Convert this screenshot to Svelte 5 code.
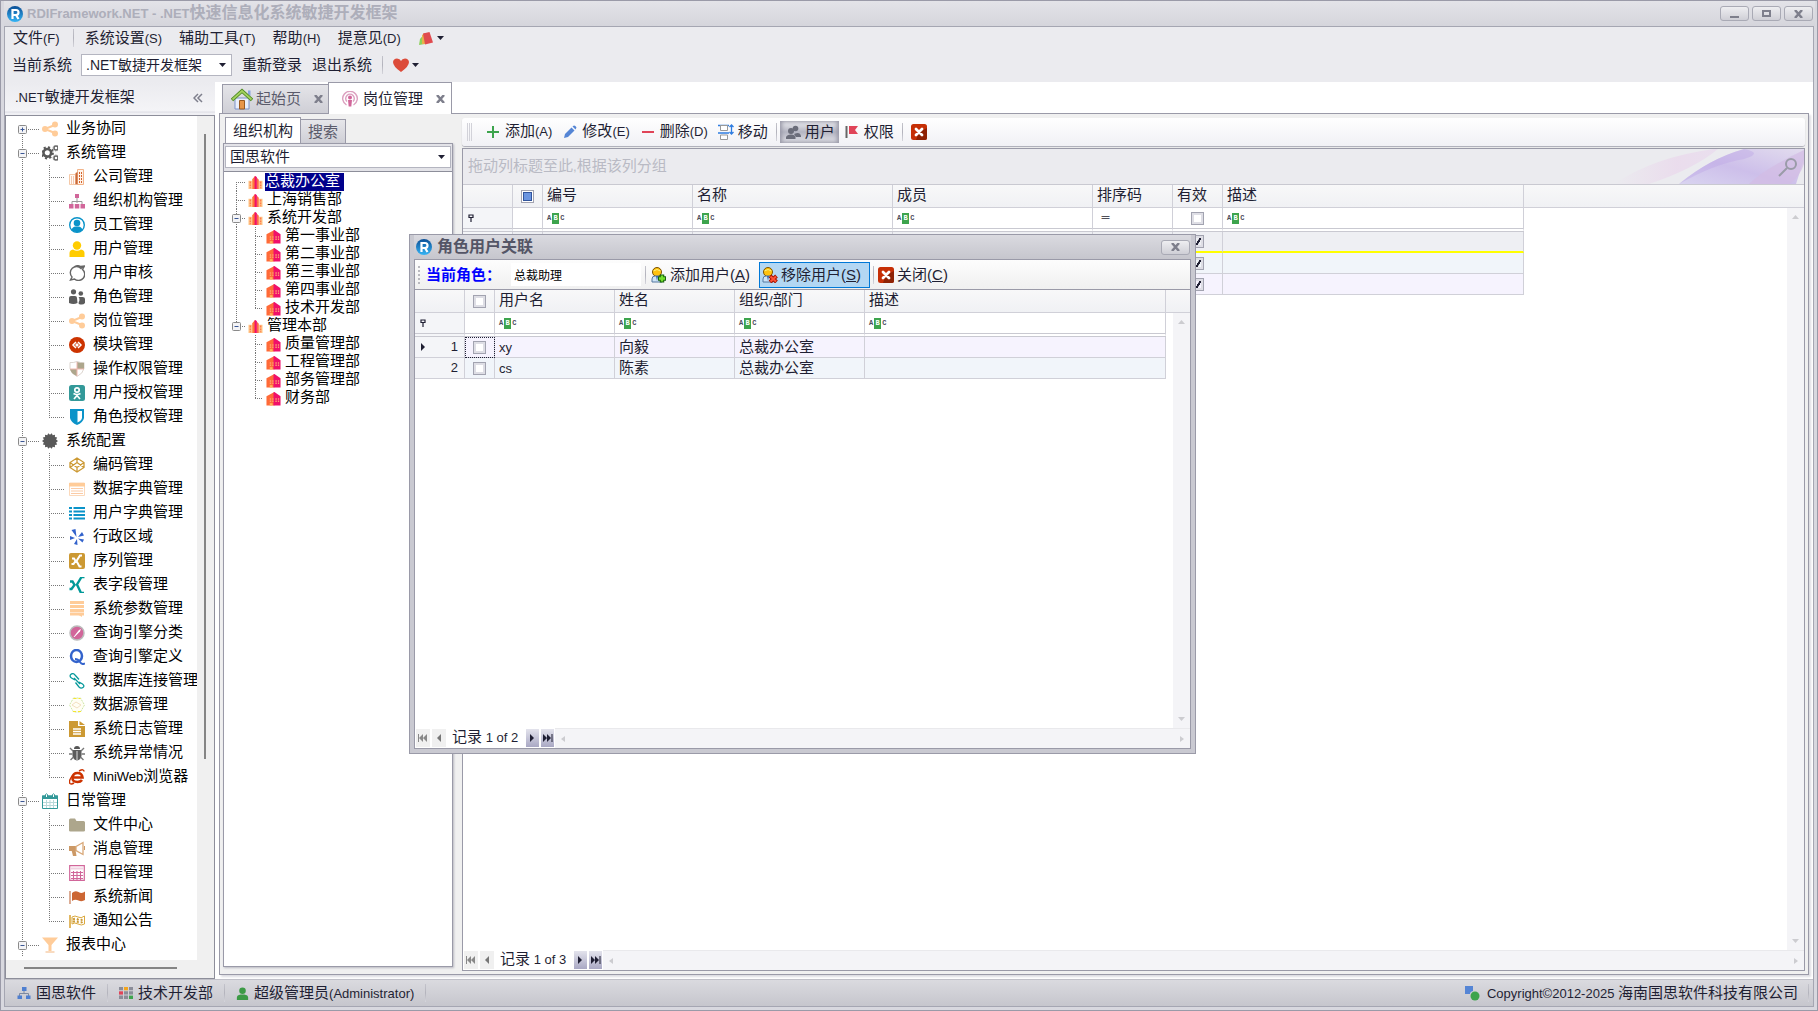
<script>
    const star = (n, r1, r2) => {
        const pts = [];
        for (let i = 0; i < n * 2; i++) {
            const r = i % 2 ? r2 : r1;
            const a = (Math.PI * i) / n;
            pts.push(`${(8 + r * Math.cos(a)).toFixed(1)},${(8 + r * Math.sin(a)).toFixed(1)}`);
        }
        return pts.join(' ');
    };

    const person = '<circle cx="6" cy="5" r="4.500" fill="#ffc20e" stroke="#7a5200"/><path d="M1 15v-3q0-3 3-3h4q3 0 3 3v3z" fill="#cfe4f7" stroke="#5578a0"/><path d="M5 9h2l-1 5z" fill="#2f66b0"/><path d="M2.500 4q3.500-3 7 0" stroke="#fff27a" fill="none"/>';

    const icons = {
        logo: '<defs><linearGradient id="lg" x2="0" y2="1"><stop stop-color="#0c4f96"/><stop offset="1" stop-color="#35b4f5"/></linearGradient></defs><circle cx="8" cy="8" r="8" fill="url(#lg)"/><path d="M5.500 13V4h3.500q2.500 0 2.500 2.500T9 9H6M9 9l2.500 4" stroke="#fff" stroke-width="2.200" fill="none"/>',
        share: '<path d="M14 3.500L3 8l11 4.500" stroke="#fc9" stroke-width="2" fill="none"/><g fill="#fc9"><circle cx="13" cy="3.500" r="3"/><circle cx="3" cy="8" r="3"/><circle cx="13" cy="12.500" r="3"/></g>',
        gears: '<g transform="translate(-1.500 1) scale(.85)"><circle cx="8" cy="8" r="4.500" fill="none" stroke="#595959" stroke-width="3"/><circle cx="8" cy="8" r="6.500" fill="none" stroke="#595959" stroke-width="2.500" stroke-dasharray="2.500 2.600"/></g><g fill="none" stroke="#666" stroke-width="1.500"><circle cx="14" cy="3" r="2"/><circle cx="14" cy="13" r="2"/></g><g fill="none" stroke="#888" stroke-width="1" stroke-dasharray="1 1.200"><circle cx="14" cy="3" r="3"/><circle cx="14" cy="13" r="3"/></g>',
        company: '<path d="M.5 15.500V5.500h6v10z" fill="#fffaf6" stroke="#f5c9a8"/><path d="M8.500 15.500V.5h6v15z" fill="#fff3ea" stroke="#f2b48a"/><path d="M6.500 15.500V4l2-1v12.500z" fill="#c96a3a"/><path d="M2.500 7.500v7M4.500 7.500v7" stroke="#e8996b" stroke-dasharray="1 1"/><path d="M10.500 3v11M12.500 3v11" stroke="#d2622a" stroke-dasharray="2 1"/>',
        org: '<path d="M8 5v5M3 11V8.500h10V11" stroke="#9a9a9a" fill="none"/><g fill="#d1669a"><path d="M6 1h4v4H6zM0 11h4.500v4.500H0zM5.800 11h4.500v4.500H5.800zM11.500 11H16v4.500h-4.500z"/></g>',
        staff: '<circle cx="8" cy="8" r="7.300" fill="#fff" stroke="#0a93c9" stroke-width="1.400"/><circle cx="8" cy="6" r="3.300" fill="#0a93c9"/><path d="M2.500 13q1-3.500 4-3.500h3q3 0 4 3.500-5 4.500-11 0z" fill="#0a93c9"/>',
        user: '<circle cx="8" cy="4.500" r="4.200" fill="#fc0"/><path d="M0.500 16v-4q0-3 3.500-3.500 4 2.500 8 0 3.500.5 3.500 3.500v4z" fill="#fc0"/>',
        audit: '<path d="M14.500 1l-2.500 2.500A6 6 0 0 0 3 12l-1.500 3 4-1a6 6 0 0 0 8-9.500L15.500 1l-4 .5A6 6 0 0 0 5 2" fill="none" stroke="#666" stroke-width="1.400"/>',
        roles: '<g fill="#5c5c5c"><circle cx="4.500" cy="2.800" r="2.600"/><circle cx="11.800" cy="4.500" r="2.300"/><path d="M0 14V9q0-2 2-2h4q2 0 2 2l.5 5q-4 2-8.500 0z"/><path d="M9.800 15q-.5-2 .5-3 .5-3-.8-4h4q2.500 0 2.500 2v4q-2 2.500-6.200 1z"/></g>',
        module: '<circle cx="8" cy="8" r="8" fill="#c30"/><path d="M7 5L4 8l3 3M9 5l3 3-3 3" stroke="#fff" stroke-width="1.500" fill="none"/><path d="M8 6L6 8l2 2 2-2z" fill="#fff"/>',
        shield4: '<path d="M8 .5q4 1.500 7 1v6q-1 5-7 8-6-3-7-8v-6q3 .5 7-1z" fill="#fff" stroke="#dcd5cf"/><path d="M8 1v7h7V2q-4 0-7-1zM8 8v7Q2 13 1 8z" fill="#ada68c"/><path d="M1 8h14M8 1v14" stroke="#f0b8b0"/>',
        auth: '<rect width="16" height="16" rx="2.500" fill="#399"/><circle cx="8" cy="5" r="2.200" fill="none" stroke="#fff" stroke-width="1.700"/><path d="M4.500 8.500q3.500 2 7 0M5 14l3-3.500 3 3.500" fill="none" stroke="#fff" stroke-width="1.700"/>',
        shield: '<path d="M1 0h14v9q-1 4.500-7 7-6-2.500-7-7z" fill="#0a93c9"/><path d="M8.500 2H13v7q-.5 2.500-4.500 4.500z" fill="#fff"/>',
        cog: `<polygon points="${star(14, 8, 6.3)}" fill="#595959"/>`,
        code: '<path d="M8 1l7 4.500v5L8 15l-7-4.500v-5zM1 5.500l7 5 7-5M1 10.500l7-5 7 5M8 1v4.500M8 10.500V15" fill="none" stroke="#c93" stroke-width="1.300"/>',
        dict: '<path d="M.5 2h15v12.500H.5z" fill="#fff" stroke="#fbd9bb"/><path d="M0 2h16v3.500H0z" fill="#fc9"/><path d="M2 7.500h12M2 10h12M2 12.500h12" stroke="#fbcba6"/>',
        list: '<path d="M0 3h3M0 6.500h3M0 10h3M0 13.500h3M4.500 3H16M4.500 6.500H16M4.500 10H16M4.500 13.500H16" stroke="#0a93c9" stroke-width="2"/>',
        region: '<g fill="#3363cc"><path d="M2.500 1l4-1 1 8zM9 8l4-5 2 3.500zM9 9.500l6 1-1.500 3zM8 10l.5 6-3.500-1zM6 9L1 7v4z"/></g>',
        serial: '<rect width="16" height="16" rx="2" fill="#c93"/><path d="M3 5.500h2L6.500 8 4.500 11h-2M13 2.500h-2L7.500 8l3 5.500h2" fill="none" stroke="#fff" stroke-width="2"/>',
        field: '<path d="M1 4.500h2.500L5.500 8l-3 4H.5M15.500 0h-3L8 7.500l4 8.500h3" fill="none" stroke="#099" stroke-width="2.400"/>',
        params: '<path d="M1 1.500h14M1 5.500h14M1 9.500h14M1 13h14" stroke="#fc9" stroke-width="3"/><path d="M8 13h5v3z" fill="#fc9"/>',
        query: '<circle cx="8" cy="8" r="7" fill="#d1669a" stroke="#bbb" stroke-width="1.500"/><path d="M4.500 12L10 5l2-1-1 2.500L5.500 12z" fill="#fff"/>',
        define: '<ellipse cx="7.500" cy="7" rx="5.500" ry="6" fill="none" stroke="#3363cc" stroke-width="2.500"/><path d="M6 10q3 0 5 3t5 1.500" fill="none" stroke="#3363cc" stroke-width="2"/>',
        link: '<path d="M6 7L2.500 5Q0 3 2 1.300T6 2l4 4.500M10 9l3.500 2q2.500 2 .5 3.500T10 14L6.500 9.500M5 5l6 6" fill="none" stroke="#099a9c" stroke-width="1.300"/>',
        source: '<path d="M4.500 1h7L15.500 8l-4 7h-7L.5 8z" fill="#fffef4" stroke="#cde6a6" stroke-dasharray="2 1"/><path d="M4.500 1.500h7M4 14.500h8" stroke="#f6e52d" stroke-dasharray="3 2"/><path d="M3 8l4-3 5 3-4 3z" stroke="#f3dfc0" fill="none"/>',
        log: '<path d="M0 0h9v5h7v11H0zM10.500 0L16 4h-5.500z" fill="#c93"/><path d="M4 8h8M4 10.500h8M4 13h8" stroke="#fff" stroke-width="1.300"/>',
        bug: '<path d="M5 4q0-3 3-3t3 3z" fill="#555"/><path d="M3.500 5h9v6q-1 4-4.500 4.500Q4.500 15 3.500 11z" fill="#5c5c5c"/><path d="M8 6v9" stroke="#ddd"/><path d="M1 3l3 3M15 3l-3 3M0 9h3.500M16 9h-3.500M1.500 15l3-3M14.500 15l-3-3" stroke="#777" stroke-width="1.400"/>',
        ie: '<path d="M3.500 8.500h10Q13 4 8.500 4T3.500 8.500 8.500 13q3 0 4.500-2" fill="none" stroke="#c30" stroke-width="2.600"/><path d="M10 2q5-2.500 5 .5M4 6Q-1 12 1 14.500q1.500 1 4-.5" fill="none" stroke="#c30" stroke-width="1.500"/>',
        calendar: '<path d="M.5 3h15v12.500H.5z" fill="#fff" stroke="#399"/><path d="M0 2.500h16v3.500H0z" fill="#399"/><path d="M1 9.500h14M1 12.500h14M4.500 7v8M8 7v8M11.500 7v8" stroke="#b9d9d9"/><path d="M3.500 4V1.500q1-1.500 2 0V4M10.500 4V1.500q1-1.500 2 0V4" fill="#fff" stroke="#399"/>',
        folder: '<path d="M0 3q0-1.500 1.500-1.500H6L7.500 4h7Q16 4 16 5.500v8q0 1-1.500 1h-13Q0 14.500 0 13.500z" fill="#ada68c"/>',
        horn: '<path d="M0 5h7v5H0z" fill="#c96"/><path d="M2.500 9h4l1 6H4z" fill="#c96"/><path d="M7 5.500l7-4v12l-7-4z" fill="#fff" stroke="#d9a878" stroke-width="1.300"/><path d="M15.500 5v4" stroke="#c96"/>',
        schedule: '<path d="M.7.7h14.600v14.600H.7z" fill="#fff" stroke="#d1669a" stroke-width="1.200"/><path d="M1 3.500h14" stroke="#f0d0e0" stroke-width="2"/><path d="M2 7.500h12M2 10.500h12M2 13.500h12M4.500 6v9M8 6v9M11.500 6v9" stroke="#d1669a" stroke-width="1.100"/>',
        flag: '<path d="M1 2v13" stroke="#c9805c" stroke-width="1.300"/><path d="M3 4q3-3 6.500-1T16 2.500V11q-3 2-6.500.5T3 12z" fill="#c63"/>',
        notice: '<path d="M1 2v13" stroke="#d9a030" stroke-width="1.500"/><path d="M3 4q3-2 6 0t6.500-1v8q-3 2-6.500 0T3 11z" fill="#fff" stroke="#dba93f"/><path d="M4 6.500q2.500-1.500 5 0t5-.5M4 9q2.500-1.500 5 0t5-.5" fill="none" stroke="#c93" stroke-dasharray="2 2" stroke-width="2"/>',
        glass: '<path d="M0 .5h16L9.500 8v6h-3V8z" fill="#fc9"/><path d="M3.500 15h9" stroke="#f7cfab" stroke-width="1.500"/>',
        house: '<path d="M4 10h14v11H4z" fill="#e9eefc" stroke="#7d93c8"/><path d="M17 2.500h2.500V8L17 6z" fill="#8aa4e0"/><path d="M8.500 12.500h5V21h-5z" fill="#e8964a" stroke="#9a5a22"/><path d="M1 12L11 3l10 9" fill="none" stroke="#4d8a20" stroke-width="3.600"/><path d="M1.500 11.500L11 3l9.500 8.500" fill="none" stroke="#a3d160" stroke-width="1.700"/>',
        podcast: '<g fill="none" stroke="#dca0bf" stroke-width="1.400"><path d="M4.500 14A7.300 7.300 0 1 1 11.500 14"/><path d="M5 10.500A4.300 4.300 0 1 1 11 10.500"/></g><circle cx="8" cy="6.500" r="2" fill="#d1669a"/><path d="M6 9h4l-.7 6.500H6.700z" fill="#d1669a"/>',
        city: '<path d="M.5 6h4v9h-4zM11.500 6h4v9h-4z" fill="#ffc98a"/><path d="M2.500 7v7M13.500 7v7" stroke="#ff7a4d" stroke-width="1.500" stroke-dasharray="2 1"/><path d="M4.500 4.500L7.500 1v14h-3z" fill="#ff7a38"/><path d="M7 1.500L8 1l1.500 1.500V15H7z" fill="#f0106a"/><path d="M9.500 3l2 2v10h-2z" fill="#ff6a45"/>',
        dept: '<path d="M.5 5.500L9 1v14.500H.5z" fill="#ff6a38"/><path d="M8 1.500L9 1l6.500 4.500v10H8z" fill="#f0106a"/><path d="M4 8.500h4M4 11h4M10 8.500h4M10 11h4" stroke="#ffa070" stroke-dasharray="1.500 1.200" stroke-width="1.500"/><path d="M4 13h3v2.500H4z" fill="#ffb45a"/>',
        add: '<path d="M8 2v12M2 8h12" stroke="#3da44d" stroke-width="2"/>',
        edit: '<path d="M2 14l1-4 6.500-6.500 3 3L6 13z" fill="#5585d5"/><path d="M10.500 2.500l1.500-1q1.500 0 2.500 2l-1 2z" fill="#5585d5"/>',
        remove: '<path d="M2 8h12" stroke="#e04458" stroke-width="2"/>',
        move: '<path d="M0 1.500h11M0 9h11" stroke="#2f7de1" stroke-width="1.400"/><path d="M2.500 1.500h7v5h-7zM2.500 11h7v4.500h-7z" fill="#fff" stroke="#999"/><path d="M13.500 1v9M11.500 3l2-2 2 2M11.500 8l2 2 2-2" fill="none" stroke="#2f7de1" stroke-width="1.300"/>',
        users: '<g fill="#6b6d7a"><circle cx="10.500" cy="4.500" r="2.800"/><circle cx="6" cy="7" r="3"/><path d="M1 15v-2q1-2.500 5-2.500t4.500 2.500v2zM9 10q6-3 7 2v1h-5z"/></g>',
        perm: '<path d="M2.500 2v12" stroke="#666" stroke-width="2"/><path d="M5 2h9l-3 4 3 4H5z" fill="#e04458"/>',
        close: '<rect width="16" height="16" rx="2.500" fill="#c62f06"/><path d="M8 8l8-4v10q0 2-2 2H5z" fill="#8e2204"/><path d="M5 5l6 6M11 5l-6 6" stroke="#fff" stroke-width="2.800" stroke-linecap="round"/>',
        userAdd: person + '<path d="M11 7.500v8M7 11.500h8" stroke="#14610a" stroke-width="4.500"/><path d="M11 8.500v6M8 11.500h6" stroke="#73e02b" stroke-width="2.400"/>',
        userDel: person + '<path d="M8 9l6.500 6M14.500 9L8 15" stroke="#a41300" stroke-width="4"/><path d="M8.500 9.500l5.500 5M14 9.500l-5.500 5" stroke="#ff5238" stroke-width="2"/>',
        tags: '<path d="M2 9l5-6v11l-6 1z" fill="#8bd05a"/><path d="M4 5l3-2v11H4z" fill="#e8b04a"/><path d="M5 3.500L11.500 2 15 12.500 7 14.500z" fill="#e04a4e"/>',
        heart: '<path d="M8 15Q0 9.500 0 5 .5 1.500 4 1.500q3 0 4 2.500 1-2.500 4-2.500 3.500 0 4 3.500 0 4.500-8 10z" fill="#dc4b3a"/>',
        net: '<path d="M8 5v3M3.500 11V8.500h9V11" stroke="#7f8aa0" fill="none"/><path d="M6 2h4.500v4H6zM1.500 10.500h4.500V14H1.500zM10 10.500h4.500V14H10z" fill="#4f7fd0"/>',
        blocks: '<g fill="#8b8d99"><path d="M1 2h4v3.300H1zM11 2h4v3.300h-4zM6 6.300h4v3.300H6zM11 6.300h4v3.300h-4zM1 10.600h4V14H1zM6 10.600h4V14H6z"/></g><path d="M6 2h4v3.300H6z" fill="#f2a51f"/><path d="M1 6.300h4v3.300H1z" fill="#e04458"/><path d="M11 10.600h4V14h-4z" fill="#3da44d"/>',
        admin: '<circle cx="8" cy="5" r="3.500" fill="#3c9a45"/><path d="M2 15v-2.500q0-3 4-3.500h4q4 .5 4 3.500V15z" fill="#3c9a45"/>',
        copy: '<path d="M1 1h8v5q-3 .5-3 3H1z" fill="#5585d5"/><circle cx="11" cy="11" r="4.500" fill="#3da44d"/>'
    };

    const menu = ['系统设置(S)', '辅助工具(T)', '帮助(H)', '提意见(D)'];

    const modules = [
        { text: '业务协同', icon: 'share', open: false, items: [] },
        {
            text: '系统管理', icon: 'gears', open: true,
            items: [
                ['company', '公司管理'],
                ['org', '组织机构管理'],
                ['staff', '员工管理'],
                ['user', '用户管理'],
                ['audit', '用户审核'],
                ['roles', '角色管理'],
                ['share', '岗位管理'],
                ['module', '模块管理'],
                ['shield4', '操作权限管理'],
                ['auth', '用户授权管理'],
                ['shield', '角色授权管理']
            ]
        },
        {
            text: '系统配置', icon: 'cog', open: true,
            items: [
                ['code', '编码管理'],
                ['dict', '数据字典管理'],
                ['list', '用户字典管理'],
                ['region', '行政区域'],
                ['serial', '序列管理'],
                ['field', '表字段管理'],
                ['params', '系统参数管理'],
                ['query', '查询引擎分类'],
                ['define', '查询引擎定义'],
                ['link', '数据库连接管理'],
                ['source', '数据源管理'],
                ['log', '系统日志管理'],
                ['bug', '系统异常情况'],
                ['ie', 'MiniWeb浏览器']
            ]
        },
        {
            text: '日常管理', icon: 'calendar', open: true,
            items: [
                ['folder', '文件中心'],
                ['horn', '消息管理'],
                ['schedule', '日程管理'],
                ['flag', '系统新闻'],
                ['notice', '通知公告']
            ]
        },
        { text: '报表中心', icon: 'glass', open: true, items: [] }
    ];

    const orgs = [
        { text: '总裁办公室', items: [] },
        { text: '上海销售部', items: [] },
        { text: '系统开发部', items: ['第一事业部', '第二事业部', '第三事业部', '第四事业部', '技术开发部'] },
        { text: '管理本部', items: ['质量管理部', '工程管理部', '部务管理部', '财务部'] }
    ];

    const users = [
        { name: 'xy', real: '向毅', dept: '总裁办公室' },
        { name: 'cs', real: '陈素', dept: '总裁办公室' }
    ];

    let selected = $state('总裁办公室');
    let dialogOpen = $state(true);

    // latin runs are set smaller than the chinese ones
    function split(text) {
        return text.match(/[\x20-\x7e©]+|[^\x20-\x7e©]+/g) ?? [];
    }
</script>

{#snippet label(text)}
    <span class="label">{#each split(text) as part}{#if /[\x20-\x7e©]/.test(part)}<span class="en">{part}</span>{:else}{part}{/if}{/each}</span>
{/snippet}

{#snippet icon(name, size = 16, box = 16)}
    <svg class="icon" width={size} height={size} viewBox="0 0 {box} {box}" aria-hidden="true">{@html icons[name]}</svg>
{/snippet}

{#snippet caret()}
    <svg class="caret" width="7" height="4" viewBox="0 0 7 4" aria-hidden="true"><path d="M0 0h7L3.500 4z" fill="#1f1f33" /></svg>
{/snippet}

{#snippet cross()}
    <svg width="9" height="8" viewBox="0 0 9 8" aria-hidden="true"><path d="M1 0l7 8M8 0L1 8" stroke="#7e7f8c" stroke-width="2.500" /></svg>
{/snippet}

{#snippet abc()}
    <span class="abc"><i>A</i><b>B</b><i>C</i></span>
{/snippet}

{#snippet pin()}
    <svg class="pin" width="6" height="8" viewBox="0 0 6 8" aria-hidden="true"><path d="M1 1h4v2.500H1zM3 3v5" stroke="#1f1f33" stroke-width="1.200" fill="none" /></svg>
{/snippet}

<!-- x: trunk position, w: width of the guide column -->
{#snippet guide(x, w, h, up, down, box)}
    <svg class="guide" width={w} height={h} viewBox="0 0 {w} {h}" aria-hidden="true">
        <g stroke="#777" stroke-dasharray="1 1" fill="none">
            {#if up}<path d="M{x + 0.5} 0v{h / 2}" />{/if}
            {#if down}<path d="M{x + 0.5} {h / 2}v{h / 2}" />{/if}
            <path d="M{x} {h / 2 + 0.5}h{w - x - 3}" />
        </g>
        {#if box}
            <rect x={x - 3.5} y={h / 2 - 3.5} width="8" height="8" rx="1" fill="#f4f4f6" stroke="#8a8a8a" />
            <path d="M{x - 1.5} {h / 2 + 0.5}h4" stroke="#3a5795" />
            {#if box === 'plus'}<path d="M{x + 0.5} {h / 2 - 1.5}v4" stroke="#3a5795" />{/if}
        {/if}
    </svg>
{/snippet}

{#snippet trunk(x, h)}
    <svg class="trunk" width="1" height={h} style="margin-left: {x}px; margin-right: {-x - 1}px" aria-hidden="true"><path d="M.5 0v{h}" stroke="#777" stroke-dasharray="1 1" /></svg>
{/snippet}

{#snippet navigator(text)}
    <div class="navigator">
        <button class="off" aria-label="第一条"><svg width="10" height="8" viewBox="0 0 10 8"><path d="M0 0h1v8H0zM5 0v8L1 4zM9 0v8L5 4z" fill="#888" /></svg></button>
        <button class="off" aria-label="上一条"><svg width="5" height="8" viewBox="0 0 5 8"><path d="M4 0v8L0 4z" fill="#777" /></svg></button>
        <span class="count">{@render label(text)}</span>
        <button aria-label="下一条"><svg width="5" height="8" viewBox="0 0 5 8"><path d="M0 0v8l4-4z" fill="#1f1f33" /></svg></button>
        <button aria-label="最后一条"><svg width="10" height="8" viewBox="0 0 10 8"><path d="M0 0v8l4-4zM4 0v8l4-4zM8.500 0h1v8h-1z" fill="#1f1f33" /></svg></button>
        <div class="hscroll">
            <svg width="4" height="6" viewBox="0 0 4 6"><path d="M4 0v6L0 3z" fill="#ccccd0" /></svg>
            <svg width="4" height="6" viewBox="0 0 4 6"><path d="M0 0v6l4-3z" fill="#ccccd0" /></svg>
        </div>
    </div>
{/snippet}

{#snippet vscroll()}
    <div class="vscroll">
        <svg width="7" height="4" viewBox="0 0 7 4"><path d="M0 4h7L3.500 0z" fill="#ccccd0" /></svg>
        <svg width="7" height="4" viewBox="0 0 7 4"><path d="M0 0h7L3.500 4z" fill="#ccccd0" /></svg>
    </div>
{/snippet}

<div class="window">
    <header class="titlebar">
        {@render icon('logo')}
        <h1>{@render label('RDIFramework.NET - .NET快速信息化系统敏捷开发框架')}</h1>
        <button class="sysbtn" aria-label="最小化"><svg width="9" height="8" viewBox="0 0 9 8"><path d="M0 6h9v2H0z" fill="#7e7f8c" /></svg></button>
        <button class="sysbtn" aria-label="最大化"><svg width="9" height="8" viewBox="0 0 9 8"><path d="M1 1h7v5H1z" fill="none" stroke="#7e7f8c" stroke-width="2" /></svg></button>
        <button class="sysbtn" aria-label="关闭">{@render cross()}</button>
    </header>

    <div class="client">
        <nav class="menubar">
            <button>{@render label('文件(F)')}</button>
            <span class="sep"></span>
            {#each menu as text}
                <button>{@render label(text)}</button>
            {/each}
            <button class="drop" aria-label="标签">{@render icon('tags')}{@render caret()}</button>
        </nav>
        <div class="systembar">
            <label for="system">当前系统</label>
            <span class="combo system">
                <select id="system"><option>.NET敏捷开发框架</option></select>
                {@render caret()}
            </span>
            <button>重新登录</button>
            <button>退出系统</button>
            <span class="sep"></span>
            <button class="drop" aria-label="收藏">{@render icon('heart')}{@render caret()}</button>
        </div>

        <div class="work">
            <aside class="sidebar">
                <div class="side-head">
                    {@render label('.NET敏捷开发框架')}
                    <button aria-label="折叠"><svg width="10" height="10" viewBox="0 0 10 10"><path d="M5 1L1 5l4 4M9 1L5 5l4 4" fill="none" stroke="#7e7f8c" stroke-width="1.500" /></svg></button>
                </div>
                <div class="side-panel">
                    <div class="side-tree">
                        <ul>
                            {#each modules as group, g}
                                <li>
                                    <button class="node">
                                        {@render guide(16, 36, 24, g > 0, true, group.open ? 'minus' : 'plus')}
                                        {@render icon(group.icon)}
                                        {@render label(group.text)}
                                    </button>
                                    <ul>
                                        {#each group.items as [name, text], i}
                                            <li>
                                                <button class="node leaf">
                                                    {@render trunk(16, 24)}
                                                    {@render guide(43, 61, 24, true, i < group.items.length - 1)}
                                                    {@render icon(name)}
                                                    {@render label(text)}
                                                </button>
                                            </li>
                                        {/each}
                                    </ul>
                                </li>
                            {/each}
                        </ul>
                    </div>
                    <div class="thumb-v"></div>
                    <div class="thumb-h"></div>
                </div>
            </aside>

            <main>
                <div class="tabs">
                    <div class="tab">
                        {@render icon('house', 22, 22)}
                        <button>起始页</button>
                        <button class="x" aria-label="关闭起始页">{@render cross()}</button>
                    </div>
                    <div class="tab current">
                        {@render icon('podcast')}
                        <button>岗位管理</button>
                        <button class="x" aria-label="关闭岗位管理">{@render cross()}</button>
                    </div>
                </div>

                <div class="page">
                    <section class="orgs">
                        <div class="org-tabs">
                            <button class="current">组织机构</button>
                            <button>搜索</button>
                        </div>
                        <div class="org-panel">
                            <div class="org-pick">
                                <span class="combo">
                                    <select aria-label="公司"><option>国思软件</option></select>
                                    {@render caret()}
                                </span>
                            </div>
                            <ul class="org-tree">
                                {#each orgs as org, o}
                                    <li>
                                        <button class="node" class:selected={selected === org.text} onclick={() => (selected = org.text)}>
                                            {@render guide(12, 24, 18, o > 0, o < orgs.length - 1, org.items.length > 0 && 'minus')}
                                            {@render icon('city', 15)}
                                            <span class="label">{org.text}</span>
                                        </button>
                                        <ul>
                                            {#each org.items as item, i}
                                                <li>
                                                    <button class="node leaf">
                                                        {#if o < orgs.length - 1}{@render trunk(12, 18)}{/if}
                                                        {@render guide(31, 42, 18, true, i < org.items.length - 1)}
                                                        {@render icon('dept', 15)}
                                                        <span class="label">{item}</span>
                                                    </button>
                                                </li>
                                            {/each}
                                        </ul>
                                    </li>
                                {/each}
                            </ul>
                        </div>
                    </section>

                    <section class="posts">
                        <div class="toolbar">
                            <span class="grip"></span>
                            <button>{@render icon('add')}{@render label('添加(A)')}</button>
                            <button>{@render icon('edit')}{@render label('修改(E)')}</button>
                            <button>{@render icon('remove')}{@render label('删除(D)')}</button>
                            <button>{@render icon('move')}移动</button>
                            <span class="sep"></span>
                            <button class="pressed" onclick={() => (dialogOpen = true)}>{@render icon('users')}用户</button>
                            <button>{@render icon('perm')}权限</button>
                            <span class="sep"></span>
                            <button aria-label="关闭">{@render icon('close')}</button>
                        </div>
                        <div class="grid">
                            <div class="group-panel">
                                {@render label('拖动列标题至此,根据该列分组')}
                                <svg class="swirl" width="260" height="35" viewBox="0 0 260 35" aria-hidden="true">
                                    <defs>
                                        <linearGradient id="pink"><stop stop-color="#ebebef" /><stop offset=".6" stop-color="#ead9ec" /><stop offset="1" stop-color="#e9dcee" /></linearGradient>
                                        <linearGradient id="violet" x1="0" y1="1" x2="1" y2="0"><stop stop-color="#d9d4f0" /><stop offset=".45" stop-color="#cdbfea" /><stop offset="1" stop-color="#e2dcee" /></linearGradient>
                                    </defs>
                                    <path d="M70 35Q110 8 170 0h4Q150 20 105 35z" fill="url(#pink)" opacity=".8" />
                                    <path d="M135 35Q165 10 200 0h60v10l-8 25z" fill="url(#violet)" />
                                    <path d="M135 35Q165 10 200 0q20 4 0 10-30 5-65 25z" fill="#bfa9e6" opacity=".45" />
                                    <path d="M205 35q15-15 55-34v14q-4 12-14 20z" fill="#d3bce4" opacity=".7" />
                                    <circle cx="247" cy="15" r="5" fill="none" stroke="#9a9ba8" stroke-width="2" />
                                    <path d="M243 19l-8 8" stroke="#9a9ba8" stroke-width="2" />
                                </svg>
                            </div>
                            <div class="grid-body">
                                <table>
                                    <colgroup>
                                        <col class="w50" /><col class="w30" /><col class="w150" /><col class="w200" /><col class="w200" />
                                        <col class="w80" /><col class="w50" /><col class="w301" /><col />
                                    </colgroup>
                                    <thead>
                                        <tr>
                                            <th></th>
                                            <th class="mid"><input type="checkbox" class="mixed" aria-label="全选" /></th>
                                            <th>编号</th><th>名称</th><th>成员</th><th>排序码</th><th>有效</th><th>描述</th>
                                            <th class="rest"></th>
                                        </tr>
                                    </thead>
                                    <tbody>
                                        <tr class="filter">
                                            <td class="ind">{@render pin()}</td>
                                            <td></td>
                                            <td>{@render abc()}</td><td>{@render abc()}</td><td>{@render abc()}</td>
                                            <td><span class="equals">＝</span></td>
                                            <td class="mid"><input type="checkbox" aria-label="筛选有效" /></td>
                                            <td>{@render abc()}</td>
                                            <td class="rest"></td>
                                        </tr>
                                        {#each ['focus', 'even', 'odd'] as kind}
                                            <tr class={kind}>
                                                <td class="ind"></td><td></td><td></td><td></td><td></td><td></td>
                                                <td class="mid"><input type="checkbox" checked aria-label="有效" /></td>
                                                <td></td>
                                                <td class="rest"></td>
                                            </tr>
                                        {/each}
                                    </tbody>
                                </table>
                                {@render vscroll()}
                            </div>
                            {@render navigator('记录 1 of 3')}
                        </div>
                    </section>
                </div>
            </main>
        </div>

        <footer>
            {@render icon('net')}<span>国思软件</span>
            <span class="sep"></span>
            {@render icon('blocks')}<span>技术开发部</span>
            <span class="sep"></span>
            {@render icon('admin', 15)}{@render label('超级管理员(Administrator)')}
            <span class="sep"></span>
            <span class="copyright">{@render icon('copy')}{@render label('Copyright©2012-2025 海南国思软件科技有限公司')}</span>
            <span class="sep"></span>
        </footer>
    </div>

    {#if dialogOpen}
        <div class="dialog" role="dialog" aria-labelledby="dlg-title">
            <div class="dlg-title">
                {@render icon('logo')}
                <h2 id="dlg-title">角色用户关联</h2>
                <button class="sysbtn" aria-label="关闭" onclick={() => (dialogOpen = false)}>{@render cross()}</button>
            </div>
            <div class="dlg-body">
                <div class="dlg-tools">
                    <span class="dots"></span>
                    <label for="role">当前角色：</label>
                    <input id="role" type="text" value="总裁助理" readonly />
                    <span class="sep"></span>
                    <button>{@render icon('userAdd')}<span>添加用户(<u>A</u>)</span></button>
                    <button class="hot">{@render icon('userDel')}<span>移除用户(<u>S</u>)</span></button>
                    <span class="sep"></span>
                    <button onclick={() => (dialogOpen = false)}>{@render icon('close')}<span>关闭(<u>C</u>)</span></button>
                </div>
                <div class="grid-body">
                    <table>
                        <colgroup>
                            <col class="w50" /><col class="w30" /><col class="w120" /><col class="w120" /><col class="w130" /><col class="w301" /><col />
                        </colgroup>
                        <thead>
                            <tr>
                                <th></th>
                                <th class="mid"><input type="checkbox" aria-label="全选用户" /></th>
                                <th>用户名</th><th>姓名</th><th>{@render label('组织/部门')}</th><th>描述</th>
                                <th class="rest"></th>
                            </tr>
                        </thead>
                        <tbody>
                            <tr class="filter">
                                <td class="ind">{@render pin()}</td>
                                <td></td>
                                <td>{@render abc()}</td><td>{@render abc()}</td><td>{@render abc()}</td><td>{@render abc()}</td>
                                <td class="rest"></td>
                            </tr>
                            {#each users as u, i}
                                <tr class={i % 2 ? 'even' : 'odd'}>
                                    <td class="ind">
                                        <span class="rownum">
                                            {#if i === 0}<svg width="5" height="8" viewBox="0 0 5 8"><path d="M0 0v8l4-4z" fill="#1f1f33" /></svg>{/if}
                                            <span class="en">{i + 1}</span>
                                        </span>
                                    </td>
                                    <td class="mid" class:active={i === 0}><input type="checkbox" aria-label={u.real} /></td>
                                    <td><span class="en">{u.name}</span></td>
                                    <td>{u.real}</td>
                                    <td>{u.dept}</td>
                                    <td></td>
                                    <td class="rest"></td>
                                </tr>
                            {/each}
                        </tbody>
                    </table>
                    {@render vscroll()}
                </div>
                {@render navigator('记录 1 of 2')}
            </div>
        </div>
    {/if}
</div>

<style>
    :global(body) {
        margin: 0;
    }
    .window {
        position: relative;
        box-sizing: border-box;
        height: 100vh;
        display: flex;
        flex-direction: column;
        padding: 0 3px 3px;
        border: 1px solid #9a9aa8;
        background: #d8d8df;
        color: #1f1f33;
        font: 15px/18px 'Liberation Sans', 'Noto Sans CJK SC', sans-serif;
        white-space: nowrap;
    }
    .window :global(*) {
        box-sizing: border-box;
    }
    .en {
        font-size: 13px;
    }
    button,
    select,
    input {
        font: inherit;
        color: inherit;
        margin: 0;
    }
    button {
        display: flex;
        align-items: center;
        padding: 0;
        border: 0;
        background: none;
        text-align: left;
    }
    ul {
        list-style: none;
        margin: 0;
        padding: 0;
    }
    svg {
        display: block;
        flex: none;
    }
    .sep {
        flex: none;
        width: 1px;
        height: 18px;
        background: linear-gradient(#c3c3cb, #b3b3bc, #d5d5dc);
    }

    /* title bar */
    .titlebar {
        flex: none;
        display: flex;
        align-items: center;
        gap: 3px;
        height: 25px;
        padding: 0 2px 0 3px;
        margin: 0 -1px 0 0;
        background: linear-gradient(#e3e3e8, #d5d5dc);
    }
    h1 {
        flex: 1;
        margin: 0 0 0 1px;
        font-size: 16px;
        font-weight: bold;
        color: #adaeba;
    }
    .sysbtn {
        justify-content: center;
        width: 29px;
        height: 15px;
        border: 1px solid #a9aab5;
        border-radius: 3px;
        background: linear-gradient(#eeeef1, #cfcfd6);
    }
    .client {
        flex: 1;
        min-height: 0;
        display: flex;
        flex-direction: column;
        border: 1px solid #a5a6b2;
        background: #fff;
    }
    .menubar,
    .systembar {
        flex: none;
        display: flex;
        align-items: center;
        padding-left: 8px;
        background: #ebebef;
    }
    .menubar {
        height: 24px;
        gap: 17px;
        padding-bottom: 2px;
    }
    .menubar .sep {
        margin: 0 -6px 0 -4px;
    }
    .drop {
        gap: 3px;
    }
    .systembar {
        height: 31px;
        gap: 10px;
        padding-left: 7px;
        padding-bottom: 4px;
    }
    .combo {
        display: grid;
        align-items: center;
    }
    .combo select {
        grid-area: 1 / 1;
        width: 100%;
        height: 22px;
        padding: 0 4px;
        border: 1px solid #b4b5c0;
        border-radius: 0;
        background: #fff;
        appearance: none;
    }
    .combo .caret {
        grid-area: 1 / 1;
        justify-self: end;
        margin-right: 6px;
    }
    .system {
        width: 151px;
        margin-left: -1px;
    }
    .system select {
        font-size: 14px;
    }

    /* left module tree */
    .work {
        flex: 1;
        min-height: 0;
        display: flex;
        gap: 4px;
    }
    .sidebar {
        flex: none;
        width: 210px;
        display: flex;
        flex-direction: column;
        background: #ebebef;
    }
    .side-head {
        flex: none;
        display: flex;
        align-items: center;
        justify-content: space-between;
        height: 33px;
        padding: 0 12px 2px 10px;
        background: linear-gradient(#ebebef, #f4f4f7 88%, #dcdce3 91%, #f0f0f4 94%);
    }
    .side-panel {
        flex: 1;
        min-height: 0;
        display: grid;
        grid-template: minmax(0, 1fr) 18px / minmax(0, 1fr) 17px;
        border: 1px solid #8d8e9a;
        background: #f0f0f0;
    }
    .side-tree {
        overflow: hidden;
        padding-top: 1px;
        background: #fff;
    }
    .side-tree .node {
        height: 24px;
        color: #000;
    }
    .side-tree .label {
        padding-bottom: 2px;
        margin-left: 8px;
    }
    .side-tree .leaf .icon {
        margin-left: 2px;
    }
    .thumb-v {
        width: 2px;
        height: 74%;
        margin: 18px 0 0 7px;
        background: #858585;
    }
    .thumb-h {
        height: 2px;
        margin: 7px 20px 0 18px;
        background: #858585;
    }

    /* document tabs */
    main {
        flex: 1;
        min-width: 0;
        display: flex;
        flex-direction: column;
    }
    .tabs {
        flex: none;
        display: flex;
        align-items: flex-end;
        height: 32px;
        padding-left: 3px;
        margin-bottom: -1px;
        z-index: 1;
    }
    .tab {
        display: flex;
        align-items: center;
        gap: 3px;
        height: 30px;
        padding: 0 5px 0 8px;
        border: 1px solid #9a9aa8;
        border-right: 0;
        background: linear-gradient(#e4e4e8, #cfcfd6);
        color: #5b5b6b;
    }
    .tab .x {
        margin-left: 10px;
    }
    .tab.current {
        gap: 5px;
        height: 32px;
        padding: 0 6px 0 13px;
        border-right: 1px solid #9a9aa8;
        border-bottom: 0;
        background: #fff;
        color: #1f1f33;
    }
    .tab.current .x {
        margin-left: 8px;
    }
    .page {
        flex: 1;
        min-height: 0;
        display: flex;
        gap: 9px;
        padding: 3px;
        margin: 0 4px 4px 0;
        border: 1px solid #9a9aa8;
        box-shadow: 2px 2px 2px #dcdce2;
        background: #f0f0f0;
    }

    /* organisation tree */
    .orgs {
        flex: none;
        width: 230px;
        display: flex;
        flex-direction: column;
        margin-bottom: 4px;
    }
    .org-tabs {
        display: flex;
        align-items: flex-end;
        height: 27px;
        padding-left: 2px;
        margin-bottom: -1px;
    }
    .org-tabs button {
        height: 25px;
        padding: 0 7px;
        border: 1px solid #9a9aa8;
        border-left: 0;
        background: linear-gradient(#e6e6ea, #cfcfd6);
        color: #5b5b6b;
    }
    .org-tabs .current {
        height: 27px;
        border-left: 1px solid #9a9aa8;
        border-bottom-color: #fff;
        background: #fff;
        color: #1f1f33;
    }
    .org-panel {
        flex: 1;
        min-height: 0;
        display: flex;
        flex-direction: column;
        border: 1px solid #9a9aa8;
        box-shadow: 1px 1px 2px #b9b9c2;
        background: #fff;
    }
    .org-pick {
        padding: 2px 1px 3px;
        border-bottom: 1px solid #8d8e9a;
        background: #e3e3e8;
    }
    .org-tree {
        padding-top: 1px;
        color: #000;
        line-height: 16px;
    }
    .org-tree .node {
        height: 18px;
    }
    .org-tree .label {
        height: 18px;
        padding: 0 2px;
        margin-left: 2px;
    }
    .org-tree .selected .label {
        min-width: 79px;
        padding: 0;
        background: #00008b;
        color: #fff;
    }

    /* toolbar and grid */
    .posts {
        flex: 1;
        min-width: 0;
        display: flex;
        flex-direction: column;
        gap: 2px;
        padding-top: 1px;
    }
    .toolbar {
        flex: none;
        display: flex;
        align-items: center;
        gap: 8px;
        height: 28px;
        padding: 0 0 1px 5px;
        border-radius: 3px;
        box-shadow: 0 1px 1px #a9aab5;
        background: linear-gradient(#fff, #f1f1f5);
    }
    .toolbar button {
        gap: 4px;
        height: 22px;
        padding: 0 1px;
    }
    .toolbar .sep {
        margin: 0 -1px;
    }
    .grip {
        width: 6px;
        height: 18px;
        margin-right: 3px;
        background: repeating-linear-gradient(90deg, #d2d2d9 0 1px, transparent 1px 2px);
    }
    .toolbar .pressed {
        padding: 0 4px 0 5px;
        margin: 0 -4px;
        background: linear-gradient(#f0f0f3, #b4b5c2 50%, #e6e6ec);
        box-shadow: inset 2px 0 4px #9a9aa8, inset -2px 0 4px #9a9aa8;
    }
    .grid {
        flex: 1;
        min-height: 0;
        display: flex;
        flex-direction: column;
        border: 1px solid #9a9aa8;
        background: #fff;
    }
    .group-panel {
        flex: none;
        display: flex;
        align-items: center;
        justify-content: space-between;
        height: 36px;
        padding-left: 5px;
        border-bottom: 1px solid #c9c9d1;
        background: #ebebef;
        color: #b9bac4;
    }
    .grid-body {
        flex: 1;
        min-height: 0;
        display: grid;
        grid-template-columns: minmax(0, 1fr) 17px;
        align-items: start;
        background: #fff;
    }
    table {
        grid-area: 1 / 1 / 2 / 3;
        width: 100%;
        table-layout: fixed;
        border-collapse: separate;
        border-spacing: 0;
    }
    th,
    td {
        height: 21px;
        padding: 0 0 0 4px;
        border-right: 1px solid #d0d0d8;
        border-bottom: 1px solid #d0d0d8;
        font-weight: normal;
        text-align: left;
        line-height: 18px;
        vertical-align: middle;
    }
    th {
        height: 23px;
        padding-bottom: 2px;
        background: linear-gradient(#f8f8f9, #f0f1f4);
    }
    .filter td {
        height: 24px;
        border-bottom: 4px double #c9c9d1;
    }
    th.mid,
    td.mid {
        padding: 0;
    }
    .focus td {
        height: 21px;
        border-bottom: 2px solid #ff0;
        background: #eeeff3;
    }
    .even td {
        background: #f1f5fa;
    }
    .odd td {
        background: #f6f3fe;
    }
    tbody td.ind {
        background: #f4f5f8;
    }
    th.rest {
        border-right: 0;
    }
    tbody td.rest {
        border-right: 0;
        border-bottom-color: #fff;
        background: #fff;
    }
    td.active {
        outline: 1px dotted #1f1f33;
        outline-offset: -1px;
    }
    .w30 { width: 30px; }
    .w50 { width: 50px; }
    .w80 { width: 80px; }
    .w120 { width: 120px; }
    .w130 { width: 130px; }
    .w150 { width: 150px; }
    .w200 { width: 200px; }
    .w301 { width: 301px; }
    .pin {
        margin-left: 1px;
    }
    .rownum {
        display: flex;
        align-items: center;
        padding: 0 6px 0 2px;
    }
    .rownum .en {
        margin-left: auto;
    }
    .abc {
        display: flex;
        align-items: center;
        gap: 1px;
        font: bold 7px/11px 'Liberation Mono', monospace;
        color: #4a4b58;
    }
    .abc i {
        font-style: normal;
    }
    .abc b {
        width: 7px;
        background: #3da44d;
        color: #fff;
        text-align: center;
    }
    .equals {
        display: block;
        font-size: 11px;
        line-height: 16px;
        padding-left: 3px;
    }
    input[type='checkbox'] {
        display: block;
        width: 13px;
        height: 13px;
        margin: 0 auto;
        border: 1px solid #a2a3b0;
        background: #fff;
        box-shadow: inset 0 0 0 2px #dedee5;
        appearance: none;
    }
    input[type='checkbox'].mixed {
        background: #6a94e0;
        box-shadow: inset 0 0 0 1px #fff, inset 0 0 0 2px #31549c;
    }
    input[type='checkbox']:checked {
        background: linear-gradient(123deg, transparent 48%, #1f1f33 49% 62%, transparent 63%);
    }
    .vscroll {
        grid-area: 1 / 2;
        align-self: stretch;
        display: flex;
        flex-direction: column;
        justify-content: space-between;
        align-items: center;
        padding: 7px 0;
        margin-top: 23px;
        background: #f4f4f7;
    }
    .navigator {
        flex: none;
        display: flex;
        align-items: stretch;
        gap: 2px;
        height: 20px;
        padding-left: 1px;
    }
    .navigator button {
        justify-content: center;
        width: 13px;
        margin: 1px 0;
        background: linear-gradient(#e3e3ec, #a9a8c4);
    }
    .navigator .off {
        width: 14px;
        background: #f0f0f0;
    }
    .count {
        padding: 0 6px 0 4px;
    }
    .hscroll {
        flex: 1;
        display: flex;
        align-items: center;
        justify-content: space-between;
        padding: 0 6px;
        margin-left: -1px;
        border-top: 1px solid #e9e9ec;
        background: #f4f4f7;
    }

    /* status bar */
    footer {
        flex: none;
        display: flex;
        align-items: center;
        gap: 4px;
        height: 27px;
        padding: 0 4px 0 11px;
        border-top: 1px solid #c0c0c8;
        background: linear-gradient(#dadadf, #c6c6cd);
    }
    footer .sep {
        margin: 0 6px 0 7px;
    }
    footer .sep:last-child {
        margin-right: 0;
    }
    .copyright {
        display: flex;
        align-items: center;
        gap: 7px;
        margin-left: auto;
        margin-right: -1px;
    }

    /* role and user dialog */
    .dialog {
        position: absolute;
        left: 408px;
        top: 233px;
        width: 787px;
        height: 520px;
        display: flex;
        flex-direction: column;
        padding: 0 4px 4px;
        border: 1px solid #9a9aa8;
        background: #c9c9d1;
        z-index: 2;
    }
    .dlg-title {
        flex: none;
        display: flex;
        align-items: center;
        gap: 5px;
        height: 24px;
        padding: 0 1px 0 2px;
        background: linear-gradient(#dadae0, #c6c6cd);
    }
    h2 {
        flex: 1;
        margin: 0;
        font-size: 16px;
        font-weight: bold;
        color: #545566;
    }
    .dlg-body {
        flex: 1;
        min-height: 0;
        display: flex;
        flex-direction: column;
        border: 1px solid #9a9aa8;
        background: #fff;
    }
    .dlg-tools {
        flex: none;
        display: flex;
        align-items: center;
        gap: 4px;
        height: 30px;
        padding-left: 3px;
        border-bottom: 1px solid #9a9aa8;
        background: linear-gradient(#fdfdfd, #f0f0f0);
    }
    .dots {
        width: 2px;
        height: 18px;
        background: repeating-linear-gradient(#b9b9bf 0 2px, transparent 2px 4px);
    }
    .dlg-tools label {
        width: 83px;
        padding-left: 2px;
        font-size: 15px;
        font-weight: bold;
        color: #00f;
    }
    .dlg-tools input {
        width: 130px;
        height: 23px;
        padding: 0 3px;
        border: 0;
        background: #fff;
        color: #000;
        font-size: 12px;
    }
    .dlg-tools button {
        gap: 3px;
        height: 26px;
        padding: 0 5px 0 1px;
    }
    .dlg-tools .hot {
        padding: 0 8px 0 2px;
        border: 1px solid #0078d7;
        background: #b3d7f3;
    }
    .dlg-tools .hot + .sep {
        margin: 0 -1px;
    }
</style>
